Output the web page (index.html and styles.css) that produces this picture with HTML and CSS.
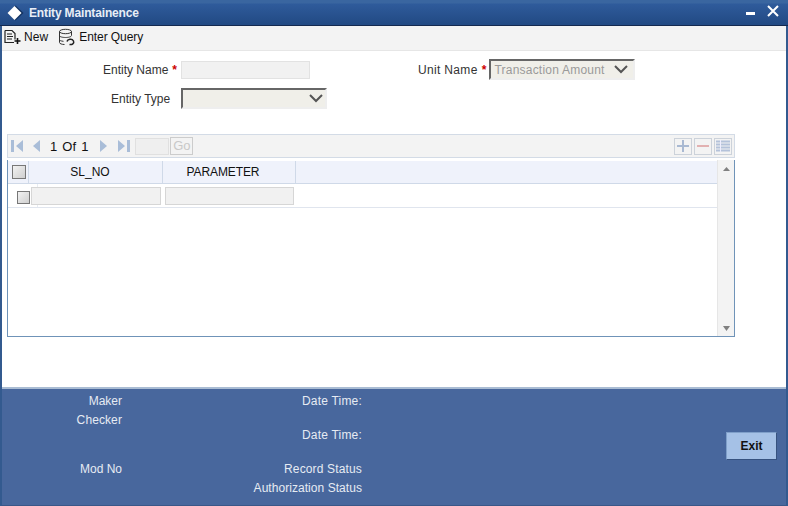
FILE: index.html
```html
<!DOCTYPE html>
<html lang="en">
<head>
<meta charset="utf-8">
<title>Entity Maintainence</title>
<link rel="stylesheet" href="styles.css">
</head>
<body>
<div class="window">
  <header class="titlebar">
    <svg class="logo" width="17" height="16" viewBox="0 0 17 16"><path d="M8.500 .5l8 7.500-8 7.500-8-7.500z" fill="#12315f"/><path d="M7.500 1l7 7-7 7-7-7z" fill="#fff"/></svg>
    <span class="title">Entity Maintainence</span>
    <svg class="minimize" width="10" height="4" viewBox="0 0 10 4"><rect width="9" height="3" y="0" fill="#fff"/></svg>
    <svg class="close" width="12" height="12" viewBox="0 0 12 12"><path d="M1 1l10 10M11 1L1 11" stroke="#fff" stroke-width="2" fill="none"/></svg>
  </header>
  <nav class="toolbar">
    <span class="tool tool-new">
      <svg width="18" height="16" viewBox="0 0 18 16"><path d="M1 1.500h7l3 3v6M1 1.500v12h9M3 5h5M3 7.500h6M3 10h5" stroke="#222" stroke-width="1.200" fill="none"/><path d="M13.500 9v6M10.500 12h6" stroke="#111" stroke-width="1.600"/></svg>
      New
    </span>
    <span class="tool tool-query">
      <svg width="18" height="18" viewBox="0 0 18 18"><ellipse cx="7.500" cy="3.500" rx="6" ry="2.200" stroke="#333" fill="none"/><path d="M1.500 3.500v11c0 1.200 2.500 2 5 2M13.500 3.500v4M1.500 7.500c0 1.300 3 2 6 2s6-.7 6-2M1.500 11.500c0 1 1.500 1.600 4 1.800" stroke="#333" fill="none"/><path d="M9 13.500c.5-2.500 5-3.500 6.500-.5 1 2.500-1.500 4-4 3.500" stroke="#222" stroke-width="1.500" fill="none"/></svg>
      Enter Query
    </span>
  </nav>
  <main class="content">
    <section class="form">
      <div class="form-col">
        <div class="field field-name">
          <label class="label">Entity Name</label><span class="req">*</span>
          <input class="text-input" type="text">
        </div>
        <div class="field field-type">
          <label class="label">Entity Type</label>
          <span class="select select-type"><span class="select-text"></span><svg class="chev" width="14" height="9" viewBox="0 0 14 9"><path d="M1 1l6 6 6-6" stroke="#555" stroke-width="2" fill="none"/></svg></span>
        </div>
      </div>
      <div class="form-col form-col-right">
        <div class="field field-unit">
          <label class="label label-unit">Unit Name</label><span class="req">*</span>
          <span class="select select-unit"><span class="select-text">Transaction Amount</span><svg class="chev" width="14" height="9" viewBox="0 0 14 9"><path d="M1 1l6 6 6-6" stroke="#555" stroke-width="2" fill="none"/></svg></span>
        </div>
      </div>
    </section>
    <section class="grid-block">
      <div class="pager">
        <span class="pg-icons">
          <svg width="13" height="12" viewBox="0 0 13 12"><path d="M0 0h3v12H0zM12 0v12L5 6z" fill="#a9bdd8"/></svg>
          <svg class="pg-gap" width="8" height="12" viewBox="0 0 8 12"><path d="M8 0v12L1 6z" fill="#a9bdd8"/></svg>
        </span>
        <span class="pg-count">1 Of 1</span>
        <span class="pg-icons">
          <svg width="8" height="12" viewBox="0 0 8 12"><path d="M0 0v12l7-6z" fill="#a9bdd8"/></svg>
          <svg class="pg-gap-wide" width="13" height="12" viewBox="0 0 13 12"><path d="M0 0v12l7-6zM9 0h3v12H9z" fill="#a9bdd8"/></svg>
        </span>
        <span class="pg-input"></span>
        <span class="pg-go">Go</span>
        <span class="pg-actions">
          <span class="act"><svg width="12" height="12" viewBox="0 0 12 12"><path d="M6 0v12M0 6h12" stroke="#a9b9d2" stroke-width="2"/></svg></span>
          <span class="act"><svg width="12" height="12" viewBox="0 0 12 12"><path d="M0 6h12" stroke="#e2b1b1" stroke-width="2"/></svg></span>
          <span class="act"><svg width="14" height="12" viewBox="0 0 14 12"><path d="M0 1.500h14M0 4.500h14M0 7.500h14M0 10.500h14" stroke="#b4c2da" stroke-width="2"/><path d="M4.500 0v12" stroke="#eef" stroke-width="1"/></svg></span>
        </span>
      </div>
      <div class="table-wrap">
        <div class="table-main">
          <div class="row row-head">
            <span class="cell cell-check"><span class="checkbox"></span></span>
            <span class="cell cell-sl">SL_NO</span>
            <span class="cell cell-param">PARAMETER</span>
          </div>
          <div class="row row-body">
            <span class="cell-check-body"><span class="checkbox checkbox-small"></span></span>
            <span class="cell-input cell-input-sl"></span>
            <span class="cell-input cell-input-param"></span>
          </div>
        </div>
        <div class="scrollbar">
          <svg width="7" height="4" viewBox="0 0 7 4"><path d="M3.500 0L7 4H0z" fill="#808080"/></svg>
          <svg width="7" height="5" viewBox="0 0 7 5"><path d="M0 0h7L3.500 5z" fill="#808080"/></svg>
        </div>
      </div>
    </section>
  </main>
  <footer class="footer">
    <div class="audit">
      <span class="a-label a1">Maker</span>
      <span class="a-label a2">Checker</span>
      <span class="a-label a3">Mod No</span>
      <span class="a-label b1">Date Time:</span>
      <span class="a-label b2">Date Time:</span>
      <span class="a-label b3">Record Status</span>
      <span class="a-label b4">Authorization Status</span>
    </div>
    <button class="exit" type="button">Exit</button>
  </footer>
</div>
</body>
</html>
```

FILE: styles.css
```css
* { box-sizing: border-box; }
html, body { margin: 0; padding: 0; }
body {
  width: 788px;
  height: 506px;
  overflow: hidden;
  font-family: "Liberation Sans", Arial, sans-serif;
  font-size: 12px;
  color: #222;
  background: #fff;
}
.window {
  width: 788px;
  height: 506px;
  display: flex;
  flex-direction: column;
  border-left: 2px solid #335a8f;
  border-right: 2px solid #335a8f;
  background: #fff;
}
.titlebar {
  height: 26px;
  flex: none;
  margin: 0 -2px;
  padding: 3px 9px 0 7px;
  display: flex;
  align-items: flex-start;
  background: linear-gradient(#3a66a0 0, #3a66a0 3px, #2f5b9b 4px, #224a84 24px);
  border-bottom: 1px solid #14294f;
  color: #e8eef6;
}
.logo { margin-top: 2px; }
.title { margin-left: 5px; margin-top: 3px; font-weight: bold; font-size: 12px; letter-spacing: -.15px; flex: 1; }
.minimize { margin-top: 9px; margin-right: 11px; }
.close { margin-top: 2px; }
.toolbar {
  height: 25px;
  flex: none;
  display: flex;
  align-items: center;
  gap: 10px;
  padding: 0 0 3px 2px;
  background: #f3f3f3;
  border-bottom: 1px solid #e6e6e6;
}
.tool { display: flex; align-items: center; gap: 2px; color: #111; }
.tool-new { letter-spacing: .1px; }
.tool-query { gap: 3px; letter-spacing: -.08px; }
.content { flex: 1; min-height: 0; padding: 0 0 0 5px; }
.form { display: flex; height: 83px; padding-top: 8px; }
.form-col { width: 411px; }
.form-col-right { padding-left: 22px; }
.field { display: flex; align-items: center; }
.label { color: #333; }
.label-unit { letter-spacing: .35px; }
.req { color: #c00; font-weight: bold; margin-left: 4px; }
.field-name { padding-left: 96px; height: 22px; }
.field-type { padding-left: 104px; margin-top: 7px; height: 21px; }
.text-input {
  width: 129px;
  height: 18px;
  margin-left: 4px;
  border: 1px solid #e2e2e2;
  background: #f1f1f1;
  padding: 0;
}
.select {
  display: flex;
  align-items: center;
  justify-content: space-between;
  background: #f0efe9;
  border: 2px solid;
  border-color: #666 #eee #eee #666;
  font-size: 12px;
  color: #9a9a9a;
}
.select-text { letter-spacing: .22px; }
.select-type { width: 146px; height: 21px; margin-left: 11px; padding: 0 2px 0 4px; }
.select-unit { width: 146px; height: 21px; margin-left: 3px; margin-top: -1px; padding: 0 5px 0 3px; }
.field-unit { height: 22px; }
.grid-block { width: 728px; }
.pager {
  height: 24px;
  display: flex;
  align-items: center;
  background: #f3f3f3;
  border: 1px solid #d3dbe6;
  padding-left: 3px;
  color: #111;
}
.pg-icons { display: flex; align-items: center; }
.pg-gap { margin-left: 8px; }
.pg-gap-wide { margin-left: 10px; }
.pg-count { margin: 0 12px 0 10px; font-size: 13px; word-spacing: 1.500px; }
.pg-input { width: 34px; height: 17px; margin-left: 4px; background: #efefef; border: 1px solid #e0e0e0; }
.pg-go {
  width: 23px; height: 18px; margin-left: 1px;
  border: 1px solid #ccc; color: #c8c8c8; text-align: center; line-height: 16px; font-size: 13px;
}
.pg-actions { margin-left: auto; display: flex; gap: 2px; margin-right: 2px; }
.act {
  width: 18px; height: 17px;
  display: flex; align-items: center; justify-content: center;
  border: 1px solid #ccd2da; background: #f3f3f3;
}
.table-wrap {
  display: flex;
  height: 177px;
  margin-top: 2px;
  border-left: 1px solid #6f93b8;
  border-right: 1px solid #6f93b8;
  border-bottom: 1px solid #6f93b8;
}
.table-main { flex: 1; min-width: 0; }
.row { display: flex; }
.row-head {
  height: 23px;
  margin-top: 1px;
  background: #eff2fb;
  border-bottom: 1px solid #cfd9e8;
  color: #111;
}
.cell {
  display: flex; align-items: center; justify-content: center;
  border-right: 1px solid #cfd9e8;
}
.cell-check { width: 21px; padding-left: 1px; }
.cell-sl { width: 134px; padding-right: 11px; }
.cell-param { width: 133px; padding-right: 12px; letter-spacing: -.1px; }
.checkbox {
  width: 14px; height: 14px;
  border: 1px solid #777;
  background: linear-gradient(135deg, #f2f2f2, #cfcfcf);
}
.checkbox-small { width: 13px; height: 13px; }
.row-body { height: 24px; border-bottom: 1px solid #e0e5ee; }
.cell-check-body {
  width: 30px;
  display: flex; align-items: flex-start; padding: 7px 0 0 9px;
  border-right: 1px solid #e8ecf2;
}
.cell-input { align-self: flex-start; margin-top: 3px; height: 18px; background: #f1f1f1; border: 1px solid #d6d6d6; }
.cell-input-sl { width: 130px; margin-left: -7px; }
.cell-input-param { width: 129px; margin-left: 4px; }
.scrollbar {
  width: 17px;
  display: flex;
  flex-direction: column;
  justify-content: space-between;
  align-items: center;
  padding: 7px 0 5px;
  background: #f3f3f3;
  border-left: 1px solid #e6e6e6;
}
.footer {
  height: 119px;
  flex: none;
  background: #48679d;
  border-top: 2px solid #a9bcd3;
  border-bottom: 1px solid #3a5788;
  display: flex;
  justify-content: space-between;
  align-items: flex-start;
}
.audit {
  width: 360px;
  display: grid;
  grid-template-columns: 120px 240px;
  grid-template-rows: 19px 15px 19px 15px 19px 19px;
  padding-top: 3px;
  color: #e6ebf3;
  box-sizing: content-box;
}
.a-label { text-align: right; line-height: 19px; white-space: nowrap; }
.a1 { grid-column: 1; grid-row: 1; }
.a2 { grid-column: 1; grid-row: 2 / 3; letter-spacing: .1px; }
.a3 { grid-column: 1; grid-row: 5; }
.b1 { grid-column: 2; grid-row: 1; letter-spacing: .2px; }
.b2 { grid-column: 2; grid-row: 3; letter-spacing: .2px; }
.b3 { grid-column: 2; grid-row: 5; letter-spacing: .15px; }
.b4 { grid-column: 2; grid-row: 6; letter-spacing: .05px; }
.exit {
  width: 51px; height: 28px;
  margin: 43px 9px 0 0;
  background: #a5c1e6;
  border: 1px solid;
  border-color: #7f9fc9 #36527f #36527f #7f9fc9;
  color: #111;
  font: bold 12px "Liberation Sans", Arial, sans-serif;
  padding: 0;
}
```
